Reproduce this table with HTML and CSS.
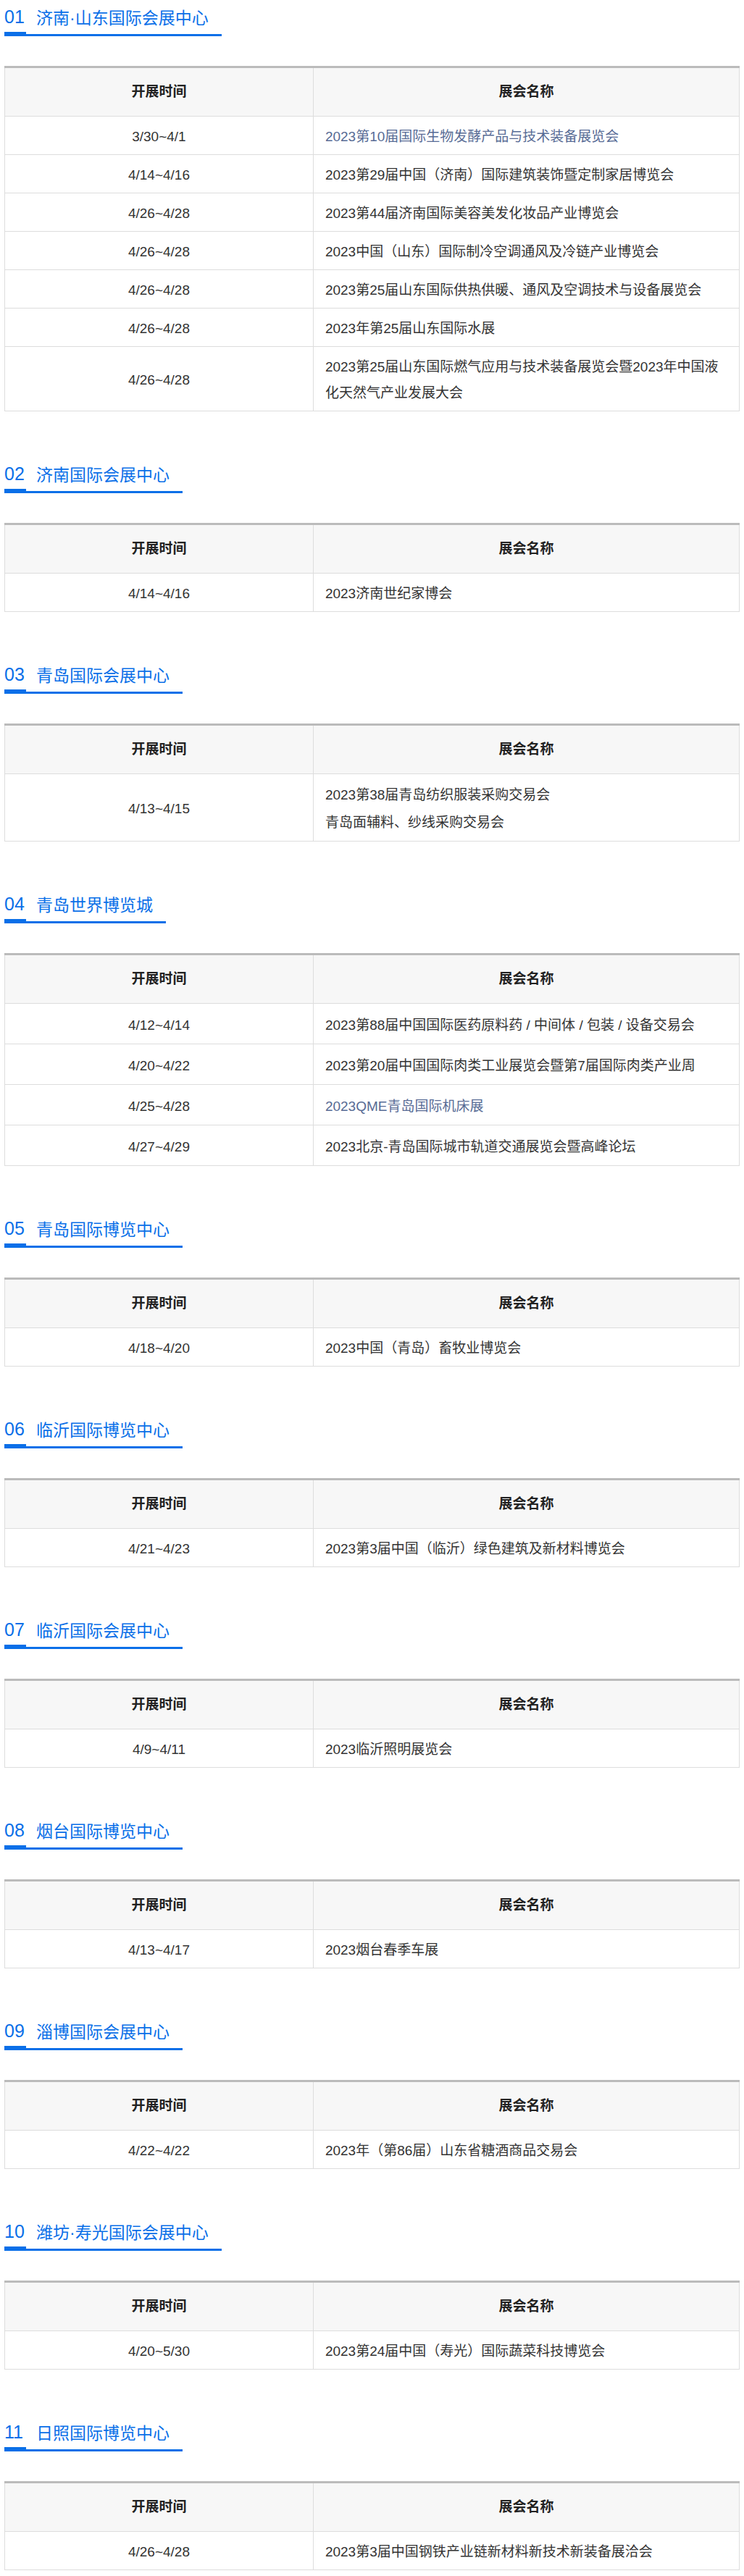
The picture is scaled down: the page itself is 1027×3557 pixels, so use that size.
FILE: index.html
```html
<!DOCTYPE html>
<html lang="zh-CN">
<head>
<meta charset="utf-8">
<title>展会排期</title>
<link rel="stylesheet" href="styles.css">
</head>
<body>
<div class="page">

<section class="section">
  <div class="sec-head"><span class="num">01</span><span class="name">济南·山东国际会展中心</span></div>
  <table class="expo">
    <tr><th class="c-date">开展时间</th><th class="c-name">展会名称</th></tr>
    <tr><td class="c-date">3/30~4/1</td><td class="c-name"><span class="link">2023第10届国际生物发酵产品与技术装备展览会</span></td></tr>
    <tr><td class="c-date">4/14~4/16</td><td class="c-name">2023第29届中国（济南）国际建筑装饰暨定制家居博览会</td></tr>
    <tr><td class="c-date">4/26~4/28</td><td class="c-name">2023第44届济南国际美容美发化妆品产业博览会</td></tr>
    <tr><td class="c-date">4/26~4/28</td><td class="c-name">2023中国（山东）国际制冷空调通风及冷链产业博览会</td></tr>
    <tr><td class="c-date">4/26~4/28</td><td class="c-name">2023第25届山东国际供热供暖、通风及空调技术与设备展览会</td></tr>
    <tr><td class="c-date">4/26~4/28</td><td class="c-name">2023年第25届山东国际水展</td></tr>
    <tr><td class="c-date">4/26~4/28</td><td class="c-name">2023第25届山东国际燃气应用与技术装备展览会暨2023年中国液化天然气产业发展大会</td></tr>
  </table>
</section>

<section class="section">
  <div class="sec-head"><span class="num">02</span><span class="name">济南国际会展中心</span></div>
  <table class="expo">
    <tr><th class="c-date">开展时间</th><th class="c-name">展会名称</th></tr>
    <tr><td class="c-date">4/14~4/16</td><td class="c-name">2023济南世纪家博会</td></tr>
  </table>
</section>

<section class="section">
  <div class="sec-head"><span class="num">03</span><span class="name">青岛国际会展中心</span></div>
  <table class="expo">
    <tr><th class="c-date">开展时间</th><th class="c-name">展会名称</th></tr>
    <tr><td class="c-date">4/13~4/15</td><td class="c-name multi"><p>2023第38届青岛纺织服装采购交易会</p><p>青岛面辅料、纱线采购交易会</p></td></tr>
  </table>
</section>

<section class="section">
  <div class="sec-head"><span class="num">04</span><span class="name">青岛世界博览城</span></div>
  <table class="expo tall">
    <tr><th class="c-date">开展时间</th><th class="c-name">展会名称</th></tr>
    <tr><td class="c-date">4/12~4/14</td><td class="c-name">2023第88届中国国际医药原料药 / 中间体 / 包装 / 设备交易会</td></tr>
    <tr><td class="c-date">4/20~4/22</td><td class="c-name">2023第20届中国国际肉类工业展览会暨第7届国际肉类产业周</td></tr>
    <tr><td class="c-date">4/25~4/28</td><td class="c-name"><span class="link">2023QME青岛国际机床展</span></td></tr>
    <tr><td class="c-date">4/27~4/29</td><td class="c-name">2023北京-青岛国际城市轨道交通展览会暨高峰论坛</td></tr>
  </table>
</section>

<section class="section">
  <div class="sec-head"><span class="num">05</span><span class="name">青岛国际博览中心</span></div>
  <table class="expo">
    <tr><th class="c-date">开展时间</th><th class="c-name">展会名称</th></tr>
    <tr><td class="c-date">4/18~4/20</td><td class="c-name">2023中国（青岛）畜牧业博览会</td></tr>
  </table>
</section>

<section class="section">
  <div class="sec-head"><span class="num">06</span><span class="name">临沂国际博览中心</span></div>
  <table class="expo">
    <tr><th class="c-date">开展时间</th><th class="c-name">展会名称</th></tr>
    <tr><td class="c-date">4/21~4/23</td><td class="c-name">2023第3届中国（临沂）绿色建筑及新材料博览会</td></tr>
  </table>
</section>

<section class="section">
  <div class="sec-head"><span class="num">07</span><span class="name">临沂国际会展中心</span></div>
  <table class="expo">
    <tr><th class="c-date">开展时间</th><th class="c-name">展会名称</th></tr>
    <tr><td class="c-date">4/9~4/11</td><td class="c-name">2023临沂照明展览会</td></tr>
  </table>
</section>

<section class="section">
  <div class="sec-head"><span class="num">08</span><span class="name">烟台国际博览中心</span></div>
  <table class="expo">
    <tr><th class="c-date">开展时间</th><th class="c-name">展会名称</th></tr>
    <tr><td class="c-date">4/13~4/17</td><td class="c-name">2023烟台春季车展</td></tr>
  </table>
</section>

<section class="section">
  <div class="sec-head"><span class="num">09</span><span class="name">淄博国际会展中心</span></div>
  <table class="expo">
    <tr><th class="c-date">开展时间</th><th class="c-name">展会名称</th></tr>
    <tr><td class="c-date">4/22~4/22</td><td class="c-name">2023年（第86届）山东省糖酒商品交易会</td></tr>
  </table>
</section>

<section class="section">
  <div class="sec-head"><span class="num">10</span><span class="name">潍坊·寿光国际会展中心</span></div>
  <table class="expo">
    <tr><th class="c-date">开展时间</th><th class="c-name">展会名称</th></tr>
    <tr><td class="c-date">4/20~5/30</td><td class="c-name">2023第24届中国（寿光）国际蔬菜科技博览会</td></tr>
  </table>
</section>

<section class="section">
  <div class="sec-head"><span class="num">11</span><span class="name">日照国际博览中心</span></div>
  <table class="expo">
    <tr><th class="c-date">开展时间</th><th class="c-name">展会名称</th></tr>
    <tr><td class="c-date">4/26~4/28</td><td class="c-name">2023第3届中国钢铁产业链新材料新技术新装备展洽会</td></tr>
  </table>
</section>

</div>
</body>
</html>
```

FILE: styles.css
```css
html, body {
  margin: 0;
  padding: 0;
  background: #fff;
}

body {
  font-family: "Liberation Sans", "Noto Sans CJK SC", sans-serif;
  color: #333;
}

.page {
  padding: 3px 6px 8px;
}

.section + .section {
  margin-top: 66px;
}

.sec-head {
  display: flex;
  align-items: flex-end;
  width: fit-content;
  border-bottom: 3px solid #0a6fe8;
  padding-right: 18px;
}

.num {
  width: 30px;
  font-size: 25px;
  line-height: 40px;
  padding-bottom: 1px;
  color: #0a6fe8;
  border-bottom: 6px solid #0a6fe8;
  margin-bottom: -3px;
}

.name {
  margin-left: 14px;
  font-size: 23px;
  line-height: 33px;
  padding-bottom: 5px;
  color: #0a6fe8;
}

.expo {
  width: 100%;
  margin-top: 41px;
  border-collapse: collapse;
  border-top: 3px solid #bbb;
  font-size: 19px;
}

.expo th {
  background: #f7f7f7;
  border: 1px solid #ddd;
  border-top: 3px solid #bbb;
  font-weight: bold;
  color: #222;
  line-height: 27px;
  padding: 19px 10px 20px;
  text-align: center;
}

.expo td {
  border: 1px solid #ddd;
  line-height: 36px;
  padding: 10px 16px 6px;
  vertical-align: middle;
}

.expo.tall td {
  padding: 12px 16px 7px;
}

.expo .c-date {
  width: 42%;
  text-align: center;
}

.expo th.c-name {
  text-align: center;
}

.expo td.c-name {
  text-align: left;
}

.link {
  color: #576b95;
}

.multi p {
  margin: 0;
  line-height: 38px;
}
```
